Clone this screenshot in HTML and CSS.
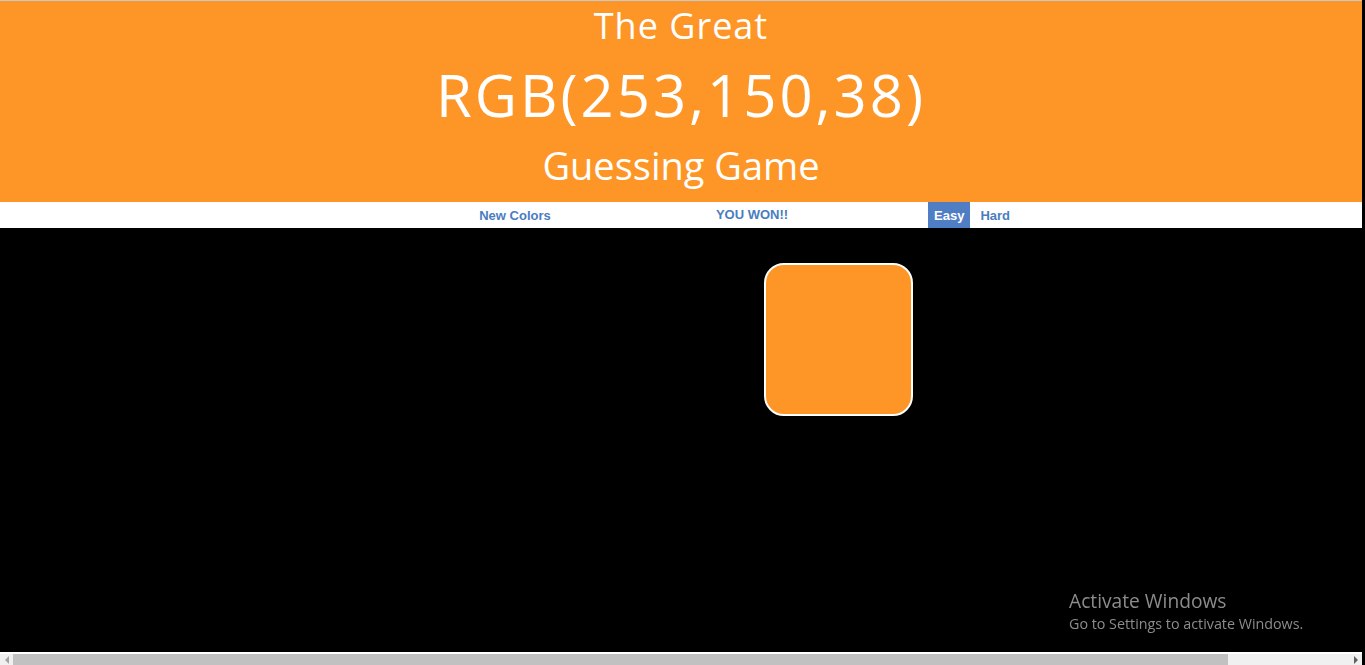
FILE: index.html
```html
<!DOCTYPE html>
<html lang="en">
<head>
<meta charset="utf-8">
<title>Color Game</title>
<link rel="stylesheet" href="styles.css">
</head>
<body>
<div class="page">
  <div class="topline"></div>
  <header class="header">
    <div class="title-small">The Great</div>
    <div class="title-rgb">RGB(253,150,38)</div>
    <div class="title-game">Guessing Game</div>
  </header>
  <nav class="stripe">
    <button class="btn btn-reset">New Colors</button>
    <span class="message">YOU WON!!</span>
    <button class="btn btn-mode btn-easy selected">Easy</button>
    <button class="btn btn-mode btn-hard">Hard</button>
  </nav>
  <main class="board">
    <div class="square"></div>
  </main>
  <div class="scrollbar">
    <div class="sb-arrow sb-left"><span class="tri tri-left"></span></div>
    <div class="sb-thumb"></div>
    <div class="sb-track"></div>
    <div class="sb-arrow sb-right"><span class="tri tri-right"></span></div>
  </div>
</div>
<div class="watermark">
  <div class="wm-title">Activate Windows</div>
  <div class="wm-sub">Go to Settings to activate Windows.</div>
</div>
</body>
</html>
```
FILE: styles.css
```css
html, body {
  margin: 0;
  padding: 0;
  height: 665px;
  overflow: hidden;
  background: #000;
}
body {
  font-family: "Open Sans", "Liberation Sans", sans-serif;
}
.page {
  width: 1362px;
  height: 665px;
  display: flex;
  flex-direction: column;
}
.topline {
  height: 1px;
  background: #c9c9c9;
}
.header {
  background: rgb(253, 150, 38);
  color: #fff;
  text-align: center;
  height: 201px;
  font-weight: 400;
}
.title-small {
  font-size: 36px;
  line-height: 50px;
  height: 50px;
  letter-spacing: 1px;
}
.title-rgb {
  font-size: 58px;
  line-height: 87px;
  height: 87px;
  letter-spacing: 3px;
}
.title-game {
  font-size: 38px;
  line-height: 55px;
  height: 55px;
}
.stripe {
  height: 26px;
  background: #fff;
  display: flex;
  align-items: stretch;
}
.btn {
  border: none;
  background: #fff;
  color: #4a7dbf;
  font-family: "Liberation Sans", sans-serif;
  font-weight: 700;
  font-size: 13px;
  padding: 0;
  margin: 0;
  height: 26px;
  cursor: pointer;
}
.btn-reset {
  margin-left: 465px;
  width: 100px;
}
.message {
  margin-left: 87px;
  width: 200px;
  text-align: center;
  color: #4a7dbf;
  font-family: "Liberation Sans", sans-serif;
  font-weight: 700;
  font-size: 13px;
  line-height: 26px;
}
.btn-easy {
  margin-left: 76px;
  padding: 0 6px;
}
.btn-hard {
  padding: 0 10px;
}
.selected {
  background: #4f7ec4;
  color: #fff;
}
.board {
  flex: 1;
  padding-top: 35px;
  padding-left: 764px;
}
.square {
  width: 145px;
  height: 149px;
  background: rgb(253, 150, 38);
  border: 2px solid #fff;
  border-radius: 20px;
}
.scrollbar {
  height: 11px;
  border-top: 2px solid #fff;
  background: #f0f0f0;
  display: flex;
}
.sb-arrow {
  width: 13px;
  display: flex;
  align-items: center;
  justify-content: center;
}
.sb-thumb {
  width: 1215px;
  background: #c1c1c1;
}
.sb-track {
  flex: 1;
}
.tri {
  width: 0;
  height: 0;
  border-top: 4px solid transparent;
  border-bottom: 4px solid transparent;
}
.tri-left {
  border-right: 4px solid #a3a3a3;
}
.tri-right {
  border-left: 4px solid #606060;
}
.watermark {
  position: fixed;
  left: 1069px;
  top: 589px;
  color: #8c8c8c;
  font-family: "Open Sans", "Noto Sans", sans-serif;
}
.wm-title {
  font-size: 19.2px;
  line-height: 24px;
}
.wm-sub {
  font-size: 14.3px;
  line-height: 21px;
}
```
